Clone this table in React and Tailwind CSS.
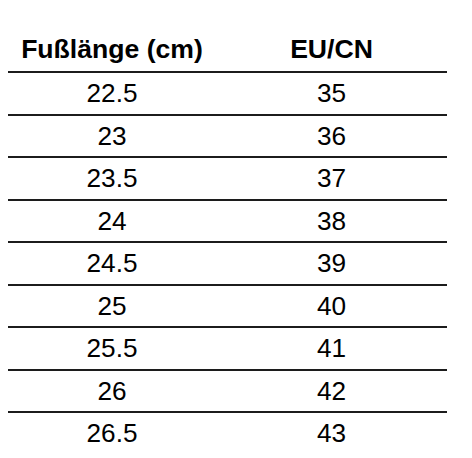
const rows = [
  ["22.5", "35"],
  ["23", "36"],
  ["23.5", "37"],
  ["24", "38"],
  ["24.5", "39"],
  ["25", "40"],
  ["25.5", "41"],
  ["26", "42"],
  ["26.5", "43"],
];

export default function App() {
  return (
    <div className="w-[472px] h-[458px] bg-white overflow-hidden font-['Liberation_Sans',Arial,sans-serif] text-black">
      <div className="ml-[8px] w-[439px] mt-[28.5px]">
        <div className="flex h-[42.5px] items-center text-[26.6px] font-bold leading-none">
          <div className="w-[208px] text-center">Fußlänge (cm)</div>
          <div className="flex-1 text-center">EU/CN</div>
        </div>
        {rows.map(([cm, eu]) => (
          <div
            key={cm}
            className="flex h-[42.5px] items-center border-t-2 border-[#1c1c1c] text-[26.2px] leading-none"
          >
            <div className="w-[208px] text-center">{cm}</div>
            <div className="flex-1 text-center">{eu}</div>
          </div>
        ))}
      </div>
    </div>
  );
}
